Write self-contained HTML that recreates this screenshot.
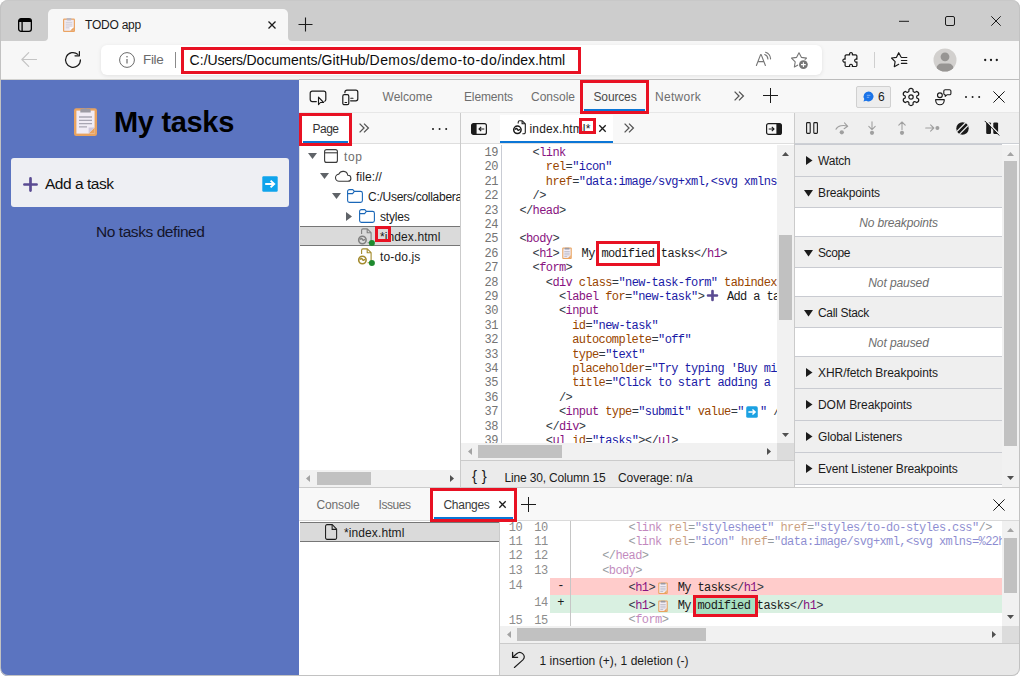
<!DOCTYPE html>
<html lang="en">
<head>
<meta charset="utf-8">
<title>TODO app</title>
<style>
*{box-sizing:border-box;margin:0;padding:0}
html,body{width:1020px;height:676px;overflow:hidden;background:#fff}
body{font-family:"Liberation Sans",sans-serif;font-size:12px;color:#1b1b1b;position:relative}
.a{position:absolute}
.t{position:absolute;white-space:nowrap;line-height:16px;height:16px}
.m{font-family:"Liberation Mono",monospace;font-size:12px;letter-spacing:-.6px}
svg{position:absolute;overflow:visible}
#win{position:absolute;left:0;top:0;width:1020px;height:676px;border-radius:8px;overflow:hidden;background:#f7f7f7}
#frame{position:absolute;left:0;top:0;width:1020px;height:676px;border-radius:8px;border:1px solid #c2c2c2;border-top-color:#c8c8c8;pointer-events:none;z-index:50}
.red{position:absolute;border:3px solid #e81123;z-index:20}
/* browser chrome */
#titlebar{left:0;top:0;width:1020px;height:41px;background:#cdcdcd}
#tab{left:48px;top:9px;width:240px;height:32px;background:#f7f7f7;border-radius:5px 5px 0 0}
#toolbar{left:0;top:41px;width:1020px;height:39px;background:#f7f7f7;border-bottom:1px solid #d2d2d0}
#addr{left:101px;top:45px;width:721px;height:30px;background:#fff;border-radius:6px;box-shadow:0 1px 4px rgba(0,0,0,.09)}
/* page */
#page{left:1px;top:80px;width:298px;height:596px;background:#5b74c0}
#form{left:10px;top:78px;width:278px;height:49px;background:#eeeff3;border-radius:3px}
/* devtools */
#dt{left:0;top:0;width:1020px;height:676px}
.bar{background:#f8f8f8}
.hl{position:absolute;background:#d0d0d0}
.sb{position:absolute;background:#f1f1f1}
.th{position:absolute;background:#c1c1c1}
.g{color:#6e6e6e}
.sec{position:absolute;left:496px;width:208px;height:31px;background:#efefef;border-bottom:1px solid #cbcbcb}
.sec .t{left:23px;top:7px;color:#1b1b1b}
.sec svg{left:10px;top:10px}
.emp{position:absolute;left:496px;width:208px;height:28px;background:#fff;border-bottom:1px solid #cbcbcb;text-align:center;font-style:italic;color:#6e6e6e;line-height:28px}
.ln{position:absolute;left:0;width:36.8px;text-align:right;color:#747474;height:14.4px;line-height:14.4px}
.cl{position:absolute;left:0;white-space:pre;height:14.4px;line-height:14.4px;color:#1b1b1b}
.es{display:inline-block;width:16px;height:10px;position:relative;vertical-align:baseline}.es svg{left:2.5px;top:.5px}
.tg{color:#881280}.an{color:#994500}.av{color:#1a1aa6}.pu{color:#303942}
</style>
</head>
<body>
<div id="win">
<div class="a" id="titlebar"></div>
<div class="a" id="tab"></div>
<div class="a" id="toolbar"></div>
<div class="a" id="addr"></div>
<svg class="a" style="left:44px;top:37px" width="4" height="4" viewBox="0 0 4 4"><path d="M4 0v4H0a4 4 0 0 0 4-4z" fill="#f7f7f7"/></svg>
<svg class="a" style="left:288px;top:37px" width="4" height="4" viewBox="0 0 4 4"><path d="M0 0v4h4a4 4 0 0 1-4-4z" fill="#f7f7f7"/></svg>
<svg style="left:18px;top:18px" width="14" height="14" viewBox="0 0 14 14"><rect x=".65" y=".65" width="12.7" height="12.7" rx="2.4" fill="none" stroke="#000" stroke-width="1.3"/><path d="M.7 3.2A2.4 2.4 0 0 1 3 .7h8a2.4 2.4 0 0 1 2.3 2.5V4H.7z" fill="#000"/><path d="M4.1 4v9.3" stroke="#000" stroke-width="1.3"/></svg>
<svg style="left:63px;top:18px" width="12" height="14" viewBox="0 0 12 14"><rect x="0" y=".6" width="12" height="13.400" rx="1.300" fill="#eba463"/><rect x="1.200" y="1.800" width="9.600" height="11" fill="#efeaf2"/><path d="M6.900 12.800l3.900-3.900v3.900z" fill="#e8a25f"/><path d="M6.900 12.800V8.900h3.900z" fill="#fdfbfd"/><rect x="3.500" y="0" width="5" height="2.400" rx=".8" fill="#bdb9c2"/><path d="M2.800 4.400h6.400M2.800 6.200h6.400M2.800 8h6.400M2.800 9.800h3.400" stroke="#cfccd5" stroke-width=".9"/></svg>
<div class="t" id="tabtitle" style="letter-spacing:-0.227px;left:85px;top:17px;font-size:12px;color:#1b1b1b">TODO app</div>
<svg style="left:268px;top:21px" width="8" height="8" viewBox="0 0 8 8"><path d="M.5.5l7 7M7.500 .5l-7 7" stroke="#1b1b1b" stroke-width="1.3" fill="none"/></svg>
<svg style="left:298px;top:17px" width="15" height="15" viewBox="0 0 15 15"><path d="M7.500 .5v14M.5 7.500h14" stroke="#1b1b1b" stroke-width="1.1" fill="none"/></svg>
<svg style="left:899px;top:16px" width="10" height="10" viewBox="0 0 10 10"><path d="M0 5.300h10" stroke="#1b1b1b" stroke-width="1" fill="none"/></svg>
<svg style="left:945px;top:16px" width="10" height="10" viewBox="0 0 10 10"><rect x=".5" y=".5" width="9" height="9" rx="1.500" fill="none" stroke="#1b1b1b" stroke-width="1"/></svg>
<svg style="left:991px;top:16px" width="10" height="10" viewBox="0 0 10 10"><path d="M.3.300l9.400 9.400M9.700 .3l-9.400 9.400" stroke="#1b1b1b" stroke-width="1" fill="none"/></svg>
<svg style="left:21px;top:52px" width="16" height="15" viewBox="0 0 16 15"><path d="M15.500 7.500H1.200M7.700 .7L.9 7.500l6.800 6.800" stroke="#c4c4c4" stroke-width="1.200" fill="none" stroke-linecap="round" stroke-linejoin="round"/></svg>
<svg style="left:65px;top:51px" width="17" height="17" viewBox="0 0 17 17"><path d="M15.400 8.900A7.400 7.400 0 1 1 12.900 3.400" stroke="#1b1b1b" stroke-width="1.250" fill="none" stroke-linecap="round"/><path d="M9.600 3.900h4.400V-.4" transform="translate(.4 .9)" stroke="#1b1b1b" stroke-width="1.250" fill="none" stroke-linecap="round" stroke-linejoin="round"/></svg>
<svg style="left:119px;top:52px" width="16" height="16" viewBox="0 0 16 16"><circle cx="8" cy="8" r="7.400" fill="none" stroke="#6b6b6b" stroke-width="1"/><path d="M8 7v4.600" stroke="#6b6b6b" stroke-width="1.200"/><circle cx="8" cy="4.800" r=".8" fill="#6b6b6b"/></svg>
<div class="t" id="filelbl" style="letter-spacing:-0.316px;left:143px;top:51px;font-size:13.5px;line-height:18px;height:18px;color:#6b6b6b">File</div>
<div class="a" style="left:175px;top:52px;width:1px;height:16px;background:#8a8a8a"></div>
<div class="t" id="url" style="left:189.600px;top:51px;font-size:14px;line-height:18px;height:18px;color:#0c0c0c"><span style="letter-spacing:0.036px;display:inline-block">C:/</span><span style="letter-spacing:-0.276px;display:inline-block">Users/</span><span style="letter-spacing:0.050px;display:inline-block">Documents/</span><span style="letter-spacing:0.076px;display:inline-block">GitHub/</span><span style="letter-spacing:0.428px;display:inline-block">Demos/</span><span style="letter-spacing:0.520px;display:inline-block">demo-to-do/</span><span style="letter-spacing:-0.031px;display:inline-block">index.html</span></div>
<svg style="left:755px;top:51px" width="18" height="16" viewBox="0 0 18 16"><path d="M1.400 14.500L5.600 3.600h.6l4.200 10.900M2.900 10.600h6" stroke="#767676" stroke-width="1.100" fill="none" stroke-linecap="round" stroke-linejoin="round"/><path d="M9.700 3.600a5 5 0 0 1 3.200 4.400M10.600 1.200a7.500 7.500 0 0 1 5 6.700" stroke="#767676" stroke-width="1.100" fill="none" stroke-linecap="round"/></svg>
<svg style="left:790px;top:51px" width="19" height="18" viewBox="0 0 19 18"><path d="M9.00 1.70L11.35 6.36L16.51 7.16L12.80 10.84L13.64 15.99L9.00 13.60L4.36 15.99L5.20 10.84L1.49 7.16L6.65 6.36Z" stroke="#767676" stroke-width="1.100" fill="none" stroke-linejoin="round"/><circle cx="13.400" cy="13.600" r="5.400" fill="#fff"/><circle cx="13.400" cy="13.600" r="4.400" fill="#767676"/><path d="M13.400 11.200v4.800M11 13.600h4.800" stroke="#fff" stroke-width="1.100"/></svg>
<svg style="left:842px;top:52.200px" width="16" height="17" viewBox="0 0 16 17"><path d="M4.400 2.800H7.700A1.500 1.500 0 1 1 10.300 2.800H13.600a1.300 1.300 0 0 1 1.300 1.300V7.300A1.500 1.500 0 1 0 14.900 9.900V13.200a1.300 1.300 0 0 1-1.300 1.300H10.300A1.500 1.500 0 1 0 7.700 14.500H4.400a1.300 1.300 0 0 1-1.300-1.300V9.900A1.500 1.500 0 1 1 3.100 7.300V4.100a1.300 1.300 0 0 1 1.300-1.300Z" stroke="#1b1b1b" stroke-width="1.200" fill="none" stroke-linejoin="round"/></svg>
<div class="a" style="left:874px;top:52px;width:1px;height:16px;background:#cfcfcf"></div>
<svg style="left:890px;top:52px" width="18" height="16" viewBox="0 0 18 16"><path d="M10.900 4.700L8.700 .7 6.500 5.300 1.500 6l3.600 3.600-.8 5.100 4.400-2.400" stroke="#1b1b1b" stroke-width="1.200" fill="none" stroke-linejoin="round" stroke-linecap="round"/><path d="M11.400 5.500h5.400M11.400 8.500h5.400M11.400 11.400h5.400" stroke="#1b1b1b" stroke-width="1.200" fill="none" stroke-linecap="round"/></svg>
<svg style="left:933px;top:48px" width="24" height="24" viewBox="0 0 24 24"><defs><clipPath id="pc"><circle cx="12" cy="12" r="11.500"/></clipPath></defs><circle cx="12" cy="12" r="11.500" fill="#d2d0ce"/><g clip-path="url(#pc)"><circle cx="12" cy="8.800" r="4.400" fill="#979593"/><path d="M3.500 24v-3.500a5 5 0 0 1 5-5h7a5 5 0 0 1 5 5V24z" fill="#979593"/></g></svg>
<svg style="left:983px;top:58px" width="16" height="4" viewBox="0 0 16 4"><circle cx="2.200" cy="2" r="1.150" fill="#1b1b1b"/><circle cx="8" cy="2" r="1.150" fill="#1b1b1b"/><circle cx="13.800" cy="2" r="1.150" fill="#1b1b1b"/></svg>
<div class="a" id="page">
<div class="a" id="form"></div>
<svg role="img" aria-label="📋" style="left:73px;top:27px" width="23" height="29" viewBox="0 0 23 29"><rect x="0" y="1.200" width="23" height="27.800" rx="2.200" fill="#e9a35f"/><rect x="2.400" y="3.600" width="18.200" height="23" fill="#f1ecf5"/><path d="M14.600 26.600l6-6v6z" fill="#e9a35f"/><path d="M14.600 26.600v-6h6z" fill="#cfc8dc"/><path d="M6.300 3.200a1.300 1.300 0 0 1 1.300-1.300h2.500a1.500 1.500 0 0 1 2.800 0h2.500a1.300 1.300 0 0 1 1.300 1.300v2.200H6.300z" fill="#9c9aa3"/><path d="M5 10h13M5 13.300h13M5 16.600h13M5 19.900h8" stroke="#a9a6b3" stroke-width="1.300"/></svg>
<div class="t" id="h1" style="letter-spacing:-0.314px;left:113px;top:22px;font-size:29px;line-height:40px;height:40px;font-weight:bold;color:#000">My tasks</div>
<svg role="img" aria-label="➕" style="left:22px;top:97px" width="15" height="15" viewBox="0 0 15 15"><path d="M7.500 1.400v12.200M1.400 7.500h12.200" stroke="#5a4b92" stroke-width="2.700" stroke-linecap="round" fill="none"/></svg>
<div class="t" id="addtask" style="letter-spacing:-0.475px;left:44px;top:93px;font-size:15.5px;line-height:22px;height:22px;color:#111">Add a task</div>
<svg role="img" aria-label="➡️" style="left:261px;top:96px" width="16" height="16" viewBox="0 0 16 16"><rect x=".3" y=".300" width="15.400" height="15.400" rx="1.200" fill="#0fa4ec"/><path d="M3.200 8h8.400M8.600 4.600L12.200 8l-3.600 3.400" stroke="#fff" stroke-width="1.900" fill="none" stroke-linejoin="miter"/></svg>
<div class="t" id="notasks" style="letter-spacing:-0.436px;left:95px;top:141px;font-size:15.5px;line-height:22px;height:22px;color:#14152b">No tasks defined</div>
</div>
<div class="a" id="dt">
<div class="a" style="left:299px;top:80px;width:721px;height:596px;background:#fff;"></div>
<div class="a" style="left:299px;top:79px;width:721px;height:1px;background:#bcbcbc;"></div>
<div class="a" style="left:299px;top:80px;width:1px;height:596px;background:#e2e2e2;"></div>
<div class="a" style="left:299px;top:80px;width:721px;height:32px;background:#f8f8f8;"></div>
<div class="a" style="left:299px;top:112px;width:721px;height:1px;background:#e7e7e7;"></div>
<div class="a" style="left:299px;top:113px;width:721px;height:30px;background:#f8f8f8;"></div>
<div class="a" style="left:299px;top:143px;width:496px;height:1px;background:#dedede;"></div>
<div class="a" style="left:795px;top:113px;width:225px;height:30px;background:#efefef;"></div>
<div class="a" style="left:795px;top:143px;width:225px;height:1px;background:#cdd0d5;"></div>
<div class="a" style="left:795px;top:144px;width:207px;height:1px;background:#c9cbd1;"></div>
<svg style="left:309px;top:90px" width="18" height="16" viewBox="0 0 18 16"><path d="M7.300 11.600H3.200a2 2 0 0 1-2-2V3.200a2 2 0 0 1 2-2H14.800a2 2 0 0 1 2 2V9.600a2 2 0 0 1-1 1.700" fill="none" stroke="#1b1b1b" stroke-width="1.200" stroke-linecap="round"/><path d="M9.500 7.100V14.600l1.900-2.100h3.200z" fill="none" stroke="#1b1b1b" stroke-width="1.100" stroke-linejoin="round"/></svg>
<svg style="left:342px;top:89px" width="17" height="17" viewBox="0 0 17 17"><path d="M2.900 3.700V3.200a2 2 0 0 1 2-2H13.800a2 2 0 0 1 2 2V9.800a2 2 0 0 1-2 2H8.600" fill="none" stroke="#1b1b1b" stroke-width="1.200" stroke-linecap="round"/><rect x=".8" y="5.700" width="6" height="10" rx="1.500" fill="none" stroke="#1b1b1b" stroke-width="1.200"/><path d="M3 13.500h1.600M8.800 9.300h2.200" stroke="#1b1b1b" stroke-width="1.100" stroke-linecap="round"/></svg>
<div class="t" style="letter-spacing:0.029px;left:382.5px;top:89.00px;font-size:12px;color:#6e6e6e;">Welcome</div>
<div class="t" style="letter-spacing:-0.129px;left:464px;top:89.00px;font-size:12px;color:#6e6e6e;">Elements</div>
<div class="t" style="letter-spacing:-0.004px;left:531px;top:89.00px;font-size:12px;color:#6e6e6e;">Console</div>
<div class="t" style="letter-spacing:-0.147px;left:593.5px;top:89.00px;font-size:12px;color:#4a4a4a;">Sources</div>
<div class="t" style="letter-spacing:0.283px;left:655px;top:89.00px;font-size:12px;color:#6e6e6e;">Network</div>
<div class="a" style="left:584px;top:109px;width:61px;height:2px;background:#0b76d6;"></div>
<svg style="left:734px;top:91px" width="10" height="10" viewBox="0 0 10 10"><path d="M.6.600L5 5 .6 9.400M5 .6L9.400 5 5 9.400" fill="none" stroke="#555" stroke-width="1.300"/></svg>
<svg style="left:763px;top:88px" width="15" height="15" viewBox="0 0 15 15"><path d="M7.500 0v15M0 7.500h15" stroke="#1b1b1b" stroke-width="1" fill="none"/></svg>
<div class="a" style="left:856px;top:86px;width:35px;height:22px;background:#ededed;border:1px solid #d0d0d0;border-radius:2px"></div>
<svg style="left:863px;top:91px" width="11" height="11" viewBox="0 0 11 11"><path d="M5.600 .4a5 5 0 1 1-2.500 9.400L.5 10.500l.8-2.500A5 5 0 0 1 5.600 .4z" fill="#1a73e8"/><path d="M3.800 4.300h3.600M3.800 6.300h2.400" stroke="#8db9f4" stroke-width=".9"/></svg>
<div class="t" style="letter-spacing:-0.188px;left:878px;top:89.00px;font-size:12px;color:#1b1b1b;">6</div>
<svg style="left:902px;top:88px" width="18" height="18" viewBox="0 0 18 18"><path d="M6.89 3.49L6.96 1.37A3 3 0 0 1 11.04 1.37L11.11 3.49A2.5 2.5 0 0 0 12.71 4.41L12.71 4.41L14.59 3.41A3 3 0 0 1 16.63 6.96L14.83 8.08A2.5 2.5 0 0 0 14.83 9.92L14.83 9.92L16.63 11.04A3 3 0 0 1 14.59 14.59L12.71 13.59A2.5 2.5 0 0 0 11.11 14.51L11.11 14.51L11.04 16.63A3 3 0 0 1 6.96 16.63L6.89 14.51A2.5 2.5 0 0 0 5.29 13.59L5.29 13.59L3.41 14.59A3 3 0 0 1 1.37 11.04L3.17 9.92A2.5 2.5 0 0 0 3.17 8.08L3.17 8.08L1.37 6.96A3 3 0 0 1 3.41 3.41L5.29 4.41A2.5 2.5 0 0 0 6.89 3.49z" fill="none" stroke="#1b1b1b" stroke-width="1.200" stroke-linejoin="round"/><circle cx="9" cy="9" r="2.200" fill="none" stroke="#1b1b1b" stroke-width="1.200"/></svg>
<svg style="left:935px;top:89px" width="17" height="17" viewBox="0 0 17 17"><circle cx="4.900" cy="6.200" r="2.400" fill="none" stroke="#1b1b1b" stroke-width="1.150"/><path d="M.7 10.600h8.500v.9a4.250 4.250 0 0 1-8.500 0z" fill="none" stroke="#1b1b1b" stroke-width="1.150" stroke-linejoin="round"/><path d="M10.200 .7h4.300a1.400 1.400 0 0 1 1.400 1.400v2.300a1.400 1.400 0 0 1-1.400 1.400h-2.600l-1.700 1.500V5.800a1.400 1.400 0 0 1-1.400-1.400V2.100A1.400 1.400 0 0 1 10.200 .7z" fill="none" stroke="#1b1b1b" stroke-width="1.100" stroke-linejoin="round"/></svg>
<svg style="left:964.3px;top:95px" width="17.2" height="4" viewBox="0 0 17.2 4"><circle cx="2" cy="2" r="1" fill="#1b1b1b"/><circle cx="8.6" cy="2" r="1" fill="#1b1b1b"/><circle cx="15.2" cy="2" r="1" fill="#1b1b1b"/></svg>
<svg style="left:993px;top:91px" width="12" height="12" viewBox="0 0 12 12"><path d="M.4.400L11.6 11.6M11.6 .4L.4 11.6" stroke="#1b1b1b" stroke-width="1" fill="none"/></svg>
<div class="a" style="left:302px;top:115px;width:47px;height:28px;background:#fff;"></div>
<div class="t" style="letter-spacing:-0.508px;left:312.5px;top:121.00px;font-size:12px;color:#333;">Page</div>
<div class="a" style="left:303px;top:140.5px;width:44.5px;height:2px;background:#0b76d6;"></div>
<svg style="left:359.4px;top:123.2px" width="10" height="10" viewBox="0 0 10 10"><path d="M.6.600L5 5 .6 9.400M5 .6L9.400 5 5 9.400" fill="none" stroke="#555" stroke-width="1.300"/></svg>
<svg style="left:431.3px;top:127px" width="17.2" height="4" viewBox="0 0 17.2 4"><circle cx="2" cy="2" r="1" fill="#1b1b1b"/><circle cx="8.6" cy="2" r="1" fill="#1b1b1b"/><circle cx="15.2" cy="2" r="1" fill="#1b1b1b"/></svg>
<div class="a" style="left:460px;top:113px;width:1px;height:375px;background:#cbcbcb;"></div>
<svg style="left:471px;top:123px" width="16" height="12" viewBox="0 0 16 12"><rect x=".6" y=".600" width="14.800" height="10.800" rx="2" fill="none" stroke="#1b1b1b" stroke-width="1.200"/><path d="M.6 2.600a2 2 0 0 1 2-2h3v10.800h-3a2 2 0 0 1-2-2z" fill="#1b1b1b"/><path d="M13.300 6H8.200M10.200 3.800L8 6l2.200 2.200" fill="none" stroke="#1b1b1b" stroke-width="1.100"/></svg>
<div class="a" style="left:500px;top:115px;width:113px;height:28px;background:#fff;"></div>
<div class="a" style="left:500px;top:141px;width:113px;height:2px;background:#0b76d6;"></div>
<svg style="left:513px;top:120px" width="13" height="15" viewBox="0 0 13 15"><path d="M5.200 3.600V2.200A1.400 1.400 0 0 1 6.600 .8h2.700l3 3v8.600a1.400 1.400 0 0 1-1.400 1.400H9.400" fill="none" stroke="#1b1b1b" stroke-width="1.100" stroke-linejoin="round"/><path d="M9.100 .9v2.900h3" fill="none" stroke="#1b1b1b" stroke-width="1.100"/><circle cx="4.400" cy="9.800" r="3.700" fill="#fff" stroke="#1b1b1b" stroke-width="1.500"/><path d="M2 9.600c.8-1.500 1.700-1.500 2.400-.2s1.500 1.200 2.400-.3" fill="none" stroke="#1b1b1b" stroke-width="1.400"/></svg>
<div class="t" style="letter-spacing:0.148px;left:529.5px;top:121.00px;font-size:12px;color:#1b1b1b;">index.html*</div>
<svg style="left:599px;top:125px" width="7" height="7" viewBox="0 0 7 7"><path d="M.3.300l6.400 6.400M6.700 .3L.3 6.700" stroke="#1b1b1b" stroke-width="1.300" fill="none"/></svg>
<svg style="left:624.2px;top:123.2px" width="10" height="10" viewBox="0 0 10 10"><path d="M.6.600L5 5 .6 9.400M5 .6L9.400 5 5 9.400" fill="none" stroke="#555" stroke-width="1.300"/></svg>
<svg style="left:766px;top:123px" width="16" height="12" viewBox="0 0 16 12"><rect x=".6" y=".600" width="14.800" height="10.800" rx="2" fill="none" stroke="#1b1b1b" stroke-width="1.200"/><path d="M15.400 2.600a2 2 0 0 0-2-2h-3v10.800h3a2 2 0 0 0 2-2z" fill="#1b1b1b"/><path d="M2.700 6h5.100M5.800 3.800L8 6 5.800 8.200" fill="none" stroke="#1b1b1b" stroke-width="1.100"/></svg>
<div class="a" style="left:794px;top:113px;width:1px;height:375px;background:#cbcbcb;"></div>
<svg style="left:806px;top:122px" width="12" height="12" viewBox="0 0 12 12"><rect x=".6" y=".600" width="3.600" height="10.800" rx=".8" fill="none" stroke="#1b1b1b" stroke-width="1.100"/><rect x="7.800" y=".600" width="3.600" height="10.800" rx=".8" fill="none" stroke="#1b1b1b" stroke-width="1.100"/></svg>
<svg style="left:835px;top:121px" width="14" height="14" viewBox="0 0 14 14"><path d="M1 8.300C2.500 4.600 8.500 3.600 12.500 5.300M9.500 1.800l3.200 3.500-3.600 2.400" fill="none" stroke="#a0a0a0" stroke-width="1.100" stroke-linecap="round" stroke-linejoin="round"/><circle cx="6.800" cy="11.300" r="2.100" fill="#a0a0a0"/></svg>
<svg style="left:867px;top:121px" width="10" height="14" viewBox="0 0 10 14"><path d="M5 .8v7.600M1.800 5.400L5 8.600l3.200-3.200" fill="none" stroke="#a0a0a0" stroke-width="1.100" stroke-linecap="round" stroke-linejoin="round"/><circle cx="5" cy="11.800" r="2.100" fill="#a0a0a0"/></svg>
<svg style="left:897px;top:121px" width="10" height="14" viewBox="0 0 10 14"><path d="M5 8.600V1M1.800 4.200L5 1l3.200 3.200" fill="none" stroke="#a0a0a0" stroke-width="1.100" stroke-linecap="round" stroke-linejoin="round"/><circle cx="5" cy="11.800" r="2.100" fill="#a0a0a0"/></svg>
<svg style="left:924.500px;top:123px" width="16" height="10" viewBox="0 0 16 10"><path d="M.7 5h7.800M5.600 1.800L8.800 5 5.600 8.200" fill="none" stroke="#a0a0a0" stroke-width="1.100" stroke-linecap="round" stroke-linejoin="round"/><circle cx="12.400" cy="5" r="2" fill="#a0a0a0"/></svg>
<svg style="left:956px;top:121.500px" width="13" height="13" viewBox="0 0 13 13"><defs><clipPath id="dbc"><circle cx="6.500" cy="6.500" r="6.200"/></clipPath></defs><circle cx="6.500" cy="6.500" r="6.200" fill="#1b1b1b"/><g clip-path="url(#dbc)"><path d="M-1 11.300L11.300 -1M1.700 14L14 1.700" stroke="#efefef" stroke-width="1.250"/></g></svg>
<svg style="left:985px;top:121px" width="14" height="14" viewBox="0 0 14 14"><rect x="1.200" y="1.400" width="4.800" height="11.500" rx="1.200" fill="#1b1b1b"/><rect x="8.300" y="1.400" width="4.800" height="11.500" rx="1.200" fill="#1b1b1b"/><path d="M.9 -.5l13.400 13.800" stroke="#efefef" stroke-width="1.300"/><path d="M0 .2l14 14" stroke="#1b1b1b" stroke-width="1" stroke-linecap="round"/></svg>
<svg style="left:307.7px;top:153.3px" width="9" height="6" viewBox="0 0 9 6"><path d="M0 0h9L4.500 6z" fill="#5f6368"/></svg>
<svg style="left:324px;top:149px" width="14" height="14" viewBox="0 0 14 14"><rect x=".6" y=".600" width="12.800" height="12.800" rx="2" fill="none" stroke="#3b3b3b" stroke-width="1.100"/><path d="M.6 3.800h12.800" stroke="#3b3b3b" stroke-width="1.100"/></svg>
<div class="t" style="letter-spacing:0.604px;left:344px;top:149.00px;font-size:12px;color:#6e6e6e;">top</div>
<svg style="left:320px;top:173.3px" width="9" height="6" viewBox="0 0 9 6"><path d="M0 0h9L4.500 6z" fill="#5f6368"/></svg>
<svg style="left:334.5px;top:170px" width="17" height="12" viewBox="0 0 17 12"><path d="M4.300 11.300a3.600 3.600 0 0 1-.4-7.200A4.700 4.700 0 0 1 12.800 5.300a3 3 0 0 1 .2 6z" fill="none" stroke="#3b3b3b" stroke-width="1.100" stroke-linejoin="round"/></svg>
<div class="t" style="letter-spacing:0.094px;left:356px;top:169.00px;font-size:12px;color:#1b1b1b;">file://</div>
<svg style="left:332px;top:193.3px" width="9" height="6" viewBox="0 0 9 6"><path d="M0 0h9L4.500 6z" fill="#5f6368"/></svg>
<svg style="left:347px;top:189.3px" width="16" height="14" viewBox="0 0 16 14"><path d="M.6 2.400A1.800 1.800 0 0 1 2.400 .6h3.400l1.600 1.800h6.200a1.800 1.800 0 0 1 1.800 1.800v7.400a1.800 1.800 0 0 1-1.800 1.800H2.400a1.800 1.800 0 0 1-1.800-1.800z" fill="none" stroke="#1a67b8" stroke-width="1.100" stroke-linejoin="round"/><path d="M.6 4.600h5l1.800-2.200" fill="none" stroke="#1a67b8" stroke-width="1.100" stroke-linejoin="round"/></svg>
<div class="a" style="left:368px;top:186px;width:92px;height:20px;overflow:hidden"><div class="t" style="letter-spacing:-0.261px;left:0;top:3px;font-size:12px;color:#1b1b1b">C:/Users/collabera</div></div>
<svg style="left:346.2px;top:211.8px" width="6" height="9" viewBox="0 0 6 9"><path d="M0 0v9l6-4.500z" fill="#5f6368"/></svg>
<svg style="left:359px;top:209.3px" width="16" height="14" viewBox="0 0 16 14"><path d="M.6 2.400A1.800 1.800 0 0 1 2.400 .6h3.400l1.600 1.800h6.200a1.800 1.800 0 0 1 1.800 1.800v7.400a1.800 1.800 0 0 1-1.800 1.800H2.400a1.800 1.800 0 0 1-1.800-1.800z" fill="none" stroke="#1a67b8" stroke-width="1.100" stroke-linejoin="round"/><path d="M.6 4.600h5l1.800-2.200" fill="none" stroke="#1a67b8" stroke-width="1.100" stroke-linejoin="round"/></svg>
<div class="t" style="letter-spacing:-0.198px;left:380px;top:209.00px;font-size:12px;color:#1b1b1b;">styles</div>
<div class="a" style="left:300px;top:226px;width:160px;height:20px;background:#dadada;border-top:1px solid #767676;border-bottom:1px solid #767676"></div>
<svg style="left:358.2px;top:227.8px" width="17" height="18" viewBox="0 0 17 18"><path d="M3.600 6V2.300A1.400 1.400 0 0 1 5 .9h4.300l3.800 3.800v8.700a1.400 1.400 0 0 1-1.400 1.400H9.600" fill="none" stroke="#808080" stroke-width="1.100" stroke-linejoin="round"/><path d="M9.200 1v3.700h3.800" fill="none" stroke="#808080" stroke-width="1.100"/><circle cx="4.400" cy="12" r="3.700" fill="none" stroke="#808080" stroke-width="1.600"/><path d="M2 11.600c.8-1.500 1.700-1.500 2.400-.2s1.500 1.200 2.400-.3" fill="none" stroke="#808080" stroke-width="1.500"/><circle cx="13.900" cy="14.900" r="3" fill="#1e8a2e"/></svg>
<div class="t" style="letter-spacing:0.102px;left:380px;top:229.00px;font-size:12px;color:#1b1b1b;">*index.html</div>
<svg style="left:358.2px;top:247.8px" width="17" height="18" viewBox="0 0 17 18"><path d="M3.600 6V2.300A1.400 1.400 0 0 1 5 .9h4.300l3.800 3.800v8.700a1.400 1.400 0 0 1-1.400 1.400H9.600" fill="none" stroke="#a38a2c" stroke-width="1.100" stroke-linejoin="round"/><path d="M9.200 1v3.700h3.800" fill="none" stroke="#a38a2c" stroke-width="1.100"/><circle cx="4.400" cy="12" r="3.700" fill="none" stroke="#a38a2c" stroke-width="1.600"/><path d="M2 11.600c.8-1.500 1.700-1.500 2.400-.2s1.500 1.200 2.400-.3" fill="none" stroke="#a38a2c" stroke-width="1.500"/><circle cx="13.900" cy="14.900" r="3" fill="#1e8a2e"/></svg>
<div class="t" style="letter-spacing:0.143px;left:380px;top:249.00px;font-size:12px;color:#1b1b1b;">to-do.js</div>
<div class="a" style="left:300px;top:470px;width:160px;height:17px;background:#f1f1f1;"></div>
<div class="a" style="left:317px;top:472px;width:53.5px;height:13px;background:#c1c1c1;"></div>
<svg style="left:305.5px;top:475px" width="4" height="7" viewBox="0 0 5 9" preserveAspectRatio="none"><path d="M5 0v9L0 4.500z" fill="#a3a3a3"/></svg>
<svg style="left:450px;top:475px" width="4" height="7" viewBox="0 0 5 9" preserveAspectRatio="none"><path d="M0 0v9l5-4.500z" fill="#505050"/></svg>
<div class="a m" style="left:461px;top:145px;width:316px;height:298px;overflow:hidden;background:#fff">
<div class="a" style="left:40px;top:0;width:1px;height:298px;background:#c9ccd4"></div>
<div class="ln" style="top:0.90px">19</div>
<div class="cl" style="left:45.200px;top:0.90px">    <span class="pu">&lt;</span><span class="tg">link</span></div>
<div class="ln" style="top:15.30px">20</div>
<div class="cl" style="left:45.200px;top:15.30px">      <span class="an">rel</span><span class="pu">=</span><span class="av">&quot;icon&quot;</span></div>
<div class="ln" style="top:29.70px">21</div>
<div class="cl" style="left:45.200px;top:29.70px">      <span class="an">href</span><span class="pu">=</span><span class="av">&quot;data:</span><span class="av">image/svg+xml,&lt;svg xmlns=</span></div>
<div class="ln" style="top:44.10px">22</div>
<div class="cl" style="left:45.200px;top:44.10px">    <span class="pu">/&gt;</span></div>
<div class="ln" style="top:58.50px">23</div>
<div class="cl" style="left:45.200px;top:58.50px">  <span class="pu">&lt;/</span><span class="tg">head</span><span class="pu">&gt;</span></div>
<div class="ln" style="top:72.90px">24</div>
<div class="ln" style="top:87.30px">25</div>
<div class="cl" style="left:45.200px;top:87.30px">  <span class="pu">&lt;</span><span class="tg">body</span><span class="pu">&gt;</span></div>
<div class="ln" style="top:101.70px">26</div>
<div class="cl" style="left:45.200px;top:101.70px">    <span class="pu">&lt;</span><span class="tg">h1</span><span class="pu">&gt;</span><span class="es"><svg class="e" role="img" aria-label="📋" width="10" height="12" viewBox="0 0 23 29"><rect x="0" y="1.200" width="23" height="27.800" rx="2.500" fill="#e9a35f"/><rect x="2.600" y="3.800" width="17.800" height="22.600" fill="#f1ecf5"/><path d="M14 26.400l6.400-6.400v6.400z" fill="#e9a35f"/><path d="M6 3.200a1.300 1.300 0 0 1 1.300-1.300H16a1.300 1.300 0 0 1 1.300 1.300v3H6z" fill="#9c9aa3"/><path d="M5 11h13M5 15h13M5 19h13M5 23h7" stroke="#b5b2be" stroke-width="1.800"/></svg></span> My modified tasks<span class="pu">&lt;/</span><span class="tg">h1</span><span class="pu">&gt;</span></div>
<div class="ln" style="top:116.10px">27</div>
<div class="cl" style="left:45.200px;top:116.10px">    <span class="pu">&lt;</span><span class="tg">form</span><span class="pu">&gt;</span></div>
<div class="ln" style="top:130.50px">28</div>
<div class="cl" style="left:45.200px;top:130.50px">      <span class="pu">&lt;</span><span class="tg">div</span> <span class="an">class</span><span class="pu">=</span><span class="av">&quot;new-task-form&quot;</span> <span class="an">tabindex</span><span class="pu">=</span><span class="av">&quot;0&quot;</span><span class="pu">&gt;</span></div>
<div class="ln" style="top:144.90px">29</div>
<div class="cl" style="left:45.200px;top:144.90px">        <span class="pu">&lt;</span><span class="tg">label</span> <span class="an">for</span><span class="pu">=</span><span class="av">&quot;new-task&quot;</span><span class="pu">&gt;</span><span class="es"><svg class="e" role="img" aria-label="➕" width="11" height="11" viewBox="0 0 15 15"><path d="M7.500 1.400v12.200M1.400 7.500h12.200" stroke="#5a4b92" stroke-width="3.6" stroke-linecap="round" fill="none"/></svg></span> Add a task<span class="pu">&lt;/</span><span class="tg">label</span><span class="pu">&gt;</span></div>
<div class="ln" style="top:159.30px">30</div>
<div class="cl" style="left:45.200px;top:159.30px">        <span class="pu">&lt;</span><span class="tg">input</span></div>
<div class="ln" style="top:173.70px">31</div>
<div class="cl" style="left:45.200px;top:173.70px">          <span class="an">id</span><span class="pu">=</span><span class="av">&quot;new-task&quot;</span></div>
<div class="ln" style="top:188.10px">32</div>
<div class="cl" style="left:45.200px;top:188.10px">          <span class="an">autocomplete</span><span class="pu">=</span><span class="av">&quot;off&quot;</span></div>
<div class="ln" style="top:202.50px">33</div>
<div class="cl" style="left:45.200px;top:202.50px">          <span class="an">type</span><span class="pu">=</span><span class="av">&quot;text&quot;</span></div>
<div class="ln" style="top:216.90px">34</div>
<div class="cl" style="left:45.200px;top:216.90px">          <span class="an">placeholder</span><span class="pu">=</span><span class="av">&quot;Try typing &#x27;Buy milk&#x27;&quot;</span></div>
<div class="ln" style="top:231.30px">35</div>
<div class="cl" style="left:45.200px;top:231.30px">          <span class="an">title</span><span class="pu">=</span><span class="av">&quot;Click to start adding a task&quot;</span></div>
<div class="ln" style="top:245.70px">36</div>
<div class="cl" style="left:45.200px;top:245.70px">        <span class="pu">/&gt;</span></div>
<div class="ln" style="top:260.10px">37</div>
<div class="cl" style="left:45.200px;top:260.10px">        <span class="pu">&lt;</span><span class="tg">input</span> <span class="an">type</span><span class="pu">=</span><span class="av">&quot;submit&quot;</span> <span class="an">value</span><span class="pu">=</span><span class="av">&quot;</span><span class="es"><svg class="e" role="img" aria-label="➡️" width="12" height="12" viewBox="0 0 16 16"><rect x=".3" y=".300" width="15.400" height="15.400" rx="2.200" fill="#1ba1e2"/><path d="M3.200 8h8.400M8.600 4.600L12.200 8l-3.600 3.400" stroke="#fff" stroke-width="1.900" fill="none"/></svg></span><span class="av">"</span> <span class="pu">/&gt;</span></div>
<div class="ln" style="top:274.50px">38</div>
<div class="cl" style="left:45.200px;top:274.50px">      <span class="pu">&lt;/</span><span class="tg">div</span><span class="pu">&gt;</span></div>
<div class="ln" style="top:288.90px">39</div>
<div class="cl" style="left:45.200px;top:288.90px">      <span class="pu">&lt;</span><span class="tg">ul</span> <span class="an">id</span><span class="pu">=</span><span class="av">&quot;tasks&quot;</span><span class="pu">&gt;</span><span class="pu">&lt;/</span><span class="tg">ul</span><span class="pu">&gt;</span></div>
</div>
<div class="a" style="left:777px;top:145px;width:17px;height:298px;background:#f1f1f1;"></div>
<div class="a" style="left:779px;top:235px;width:13px;height:85px;background:#c1c1c1;"></div>
<svg style="left:782px;top:151.5px" width="7" height="4" viewBox="0 0 9 5" preserveAspectRatio="none"><path d="M0 5h9L4.500 0z" fill="#505050"/></svg>
<svg style="left:782px;top:432.5px" width="7" height="4" viewBox="0 0 9 5" preserveAspectRatio="none"><path d="M0 0h9L4.500 5z" fill="#505050"/></svg>
<div class="a" style="left:461px;top:443px;width:316px;height:17px;background:#f1f1f1;"></div>
<div class="a" style="left:777px;top:443px;width:17px;height:17px;background:#dcdcdc;"></div>
<div class="a" style="left:478px;top:445px;width:83.5px;height:13px;background:#c1c1c1;"></div>
<svg style="left:467.5px;top:448px" width="4" height="7" viewBox="0 0 5 9" preserveAspectRatio="none"><path d="M5 0v9L0 4.500z" fill="#a3a3a3"/></svg>
<svg style="left:767px;top:448px" width="4" height="7" viewBox="0 0 5 9" preserveAspectRatio="none"><path d="M0 0v9l5-4.500z" fill="#505050"/></svg>
<div class="a" style="left:461px;top:460px;width:333px;height:27px;background:#ebebeb;border-top:1px solid #cbcbcb"></div>
<div class="t" style="letter-spacing:0.271px;left:472px;top:467.50px;font-size:15px;color:#1b1b1b;">{ }</div>
<div class="t" style="letter-spacing:-0.171px;left:504.5px;top:470.00px;font-size:12px;color:#1b1b1b;">Line 30, Column 15</div>
<div class="t" style="letter-spacing:-0.069px;left:618px;top:470.00px;font-size:12px;color:#1b1b1b;">Coverage: n/a</div>
<div class="a" style="left:795px;top:145px;width:207px;height:342px;background:#fff;"></div>
<div class="a" style="left:795px;top:145px;width:207px;height:31px;background:#efefef;"></div>
<div class="a" style="left:795px;top:176px;width:207px;height:1px;background:#c9cbd1;"></div>
<svg style="left:806px;top:156px" width="6.500" height="9" viewBox="0 0 6 8" preserveAspectRatio="none"><path d="M0 0v8l6-4z" fill="#1b1b1b"/></svg>
<div class="t" style="letter-spacing:-0.212px;left:818px;top:153.00px;font-size:12px;color:#1b1b1b;">Watch</div>
<div class="a" style="left:795px;top:177px;width:207px;height:30px;background:#efefef;"></div>
<div class="a" style="left:795px;top:207px;width:207px;height:1px;background:#c9cbd1;"></div>
<svg style="left:803.5px;top:189.5px" width="9" height="6.500" viewBox="0 0 8 6" preserveAspectRatio="none"><path d="M0 0h8L4 6z" fill="#1b1b1b"/></svg>
<div class="t" style="letter-spacing:-0.125px;left:818px;top:185.00px;font-size:12px;color:#1b1b1b;">Breakpoints</div>
<div class="a" style="left:795px;top:237px;width:207px;height:30px;background:#efefef;"></div>
<div class="a" style="left:795px;top:267px;width:207px;height:1px;background:#c9cbd1;"></div>
<svg style="left:803.5px;top:249.5px" width="9" height="6.500" viewBox="0 0 8 6" preserveAspectRatio="none"><path d="M0 0h8L4 6z" fill="#1b1b1b"/></svg>
<div class="t" style="letter-spacing:-0.406px;left:818px;top:245.00px;font-size:12px;color:#1b1b1b;">Scope</div>
<div class="a" style="left:795px;top:297px;width:207px;height:30px;background:#efefef;"></div>
<div class="a" style="left:795px;top:327px;width:207px;height:1px;background:#c9cbd1;"></div>
<svg style="left:803.5px;top:309.5px" width="9" height="6.500" viewBox="0 0 8 6" preserveAspectRatio="none"><path d="M0 0h8L4 6z" fill="#1b1b1b"/></svg>
<div class="t" style="letter-spacing:-0.303px;left:818px;top:305.00px;font-size:12px;color:#1b1b1b;">Call Stack</div>
<div class="a" style="left:795px;top:357px;width:207px;height:31px;background:#efefef;"></div>
<div class="a" style="left:795px;top:388px;width:207px;height:1px;background:#c9cbd1;"></div>
<svg style="left:806px;top:368px" width="6.500" height="9" viewBox="0 0 6 8" preserveAspectRatio="none"><path d="M0 0v8l6-4z" fill="#1b1b1b"/></svg>
<div class="t" style="letter-spacing:-0.066px;left:818px;top:365.00px;font-size:12px;color:#1b1b1b;">XHR/fetch Breakpoints</div>
<div class="a" style="left:795px;top:389px;width:207px;height:31px;background:#efefef;"></div>
<div class="a" style="left:795px;top:420px;width:207px;height:1px;background:#c9cbd1;"></div>
<svg style="left:806px;top:400px" width="6.500" height="9" viewBox="0 0 6 8" preserveAspectRatio="none"><path d="M0 0v8l6-4z" fill="#1b1b1b"/></svg>
<div class="t" style="letter-spacing:-0.047px;left:818px;top:397.00px;font-size:12px;color:#1b1b1b;">DOM Breakpoints</div>
<div class="a" style="left:795px;top:421px;width:207px;height:31px;background:#efefef;"></div>
<div class="a" style="left:795px;top:452px;width:207px;height:1px;background:#c9cbd1;"></div>
<svg style="left:806px;top:432px" width="6.500" height="9" viewBox="0 0 6 8" preserveAspectRatio="none"><path d="M0 0v8l6-4z" fill="#1b1b1b"/></svg>
<div class="t" style="letter-spacing:-0.170px;left:818px;top:429.00px;font-size:12px;color:#1b1b1b;">Global Listeners</div>
<div class="a" style="left:795px;top:453px;width:207px;height:31px;background:#efefef;"></div>
<div class="a" style="left:795px;top:484px;width:207px;height:1px;background:#c9cbd1;"></div>
<svg style="left:806px;top:464px" width="6.500" height="9" viewBox="0 0 6 8" preserveAspectRatio="none"><path d="M0 0v8l6-4z" fill="#1b1b1b"/></svg>
<div class="t" style="letter-spacing:-0.151px;left:818px;top:461.00px;font-size:12px;color:#1b1b1b;">Event Listener Breakpoints</div>
<div class="a" style="left:795px;top:236px;width:207px;height:1px;background:#c9cbd1;"></div>
<div class="t" style="letter-spacing:-0.158px;left:859.25px;top:215.00px;font-size:12px;color:#6e6e6e;font-style:italic">No breakpoints</div>
<div class="a" style="left:795px;top:296px;width:207px;height:1px;background:#c9cbd1;"></div>
<div class="t" style="letter-spacing:-0.089px;left:868.25px;top:275.00px;font-size:12px;color:#6e6e6e;font-style:italic">Not paused</div>
<div class="a" style="left:795px;top:356px;width:207px;height:1px;background:#c9cbd1;"></div>
<div class="t" style="letter-spacing:-0.089px;left:868.25px;top:335.00px;font-size:12px;color:#6e6e6e;font-style:italic">Not paused</div>
<div class="a" style="left:1002px;top:145px;width:17px;height:342px;background:#f1f1f1;"></div>
<div class="a" style="left:1004px;top:161px;width:13px;height:284.5px;background:#c1c1c1;"></div>
<svg style="left:1007px;top:151.5px" width="7" height="4" viewBox="0 0 9 5" preserveAspectRatio="none"><path d="M0 5h9L4.500 0z" fill="#a3a3a3"/></svg>
<svg style="left:1007px;top:475.5px" width="7" height="4" viewBox="0 0 9 5" preserveAspectRatio="none"><path d="M0 0h9L4.500 5z" fill="#505050"/></svg>
<div class="a" style="left:299px;top:487px;width:721px;height:1px;background:#cbcbcb;"></div>
<div class="a" style="left:299px;top:488px;width:721px;height:33px;background:#f8f8f8;"></div>
<div class="a" style="left:299px;top:520px;width:721px;height:1px;background:#dadada;"></div>
<div class="t" style="letter-spacing:-0.147px;left:316.5px;top:497.00px;font-size:12px;color:#6e6e6e;">Console</div>
<div class="t" style="letter-spacing:-0.448px;left:378.5px;top:497.00px;font-size:12px;color:#6e6e6e;">Issues</div>
<div class="a" style="left:433px;top:490px;width:81px;height:29px;background:#fff;"></div>
<div class="t" style="letter-spacing:-0.292px;left:443.5px;top:497.00px;font-size:12px;color:#3a3a3a;">Changes</div>
<div class="a" style="left:434px;top:517px;width:79px;height:2px;background:#0b76d6;"></div>
<svg style="left:499px;top:501px" width="7" height="7" viewBox="0 0 7 7"><path d="M.3.300l6.400 6.400M6.700 .3L.3 6.700" stroke="#1b1b1b" stroke-width="1.300" fill="none"/></svg>
<svg style="left:521px;top:497px" width="15" height="15" viewBox="0 0 15 15"><path d="M7.500 0v15M0 7.500h15" stroke="#1b1b1b" stroke-width="1" fill="none"/></svg>
<svg style="left:993px;top:499px" width="12" height="12" viewBox="0 0 12 12"><path d="M.4.400l11.200 11.200M11.600 .4L.4 11.600" stroke="#1b1b1b" stroke-width="1" fill="none"/></svg>
<div class="a" style="left:299px;top:521px;width:200px;height:155px;background:#fff;"></div>
<div class="a" style="left:300px;top:522px;width:199px;height:20px;background:#dadada;border-top:1px solid #767676;border-bottom:1px solid #767676"></div>
<svg style="left:324.500px;top:524px" width="12.2" height="16" viewBox="0 0 13 16" preserveAspectRatio="none"><path d="M2.200 .6h5.600l4.600 4.600v8.600a1.600 1.600 0 0 1-1.600 1.600H2.200A1.600 1.600 0 0 1 .6 13.800V2.200A1.600 1.600 0 0 1 2.200 .6z" fill="none" stroke="#1b1b1b" stroke-width="1.100" stroke-linejoin="round"/><path d="M7.600 .8v4.600h4.600" fill="none" stroke="#1b1b1b" stroke-width="1.100"/></svg>
<div class="t" style="letter-spacing:0.102px;left:344px;top:525.00px;font-size:12px;color:#1b1b1b;">*index.html</div>
<div class="a" style="left:499px;top:521px;width:1px;height:155px;background:#cbcbcb;"></div>
<div class="a m" style="left:500px;top:521px;width:502px;height:105px;overflow:hidden;background:#fff">
<div class="ln" style="left:0;width:22px;top:-0.40px;color:#8c8c8c">10</div>
<div class="ln" style="left:0;width:47.500px;top:-0.40px;color:#8c8c8c">10</div>
<div class="cl" style="left:75.800px;top:-0.40px;opacity:.5">        <span class="pu">&lt;</span><span class="tg">link</span> <span class="an">rel</span><span class="pu">=</span><span class="av">&quot;stylesheet&quot;</span> <span class="an">href</span><span class="pu">=</span><span class="av">&quot;styles/to-do-styles.css&quot;</span><span class="pu">/&gt;</span></div>
<div class="ln" style="left:0;width:22px;top:14.00px;color:#8c8c8c">11</div>
<div class="ln" style="left:0;width:47.500px;top:14.00px;color:#8c8c8c">11</div>
<div class="cl" style="left:75.800px;top:14.00px;opacity:.5">        <span class="pu">&lt;</span><span class="tg">link</span> <span class="an">rel</span><span class="pu">=</span><span class="av">&quot;icon&quot;</span> <span class="an">href</span><span class="pu">=</span><span class="av">&quot;data:</span><span class="av">image/svg+xml,&lt;svg xmlns=%22h</span></div>
<div class="ln" style="left:0;width:22px;top:28.40px;color:#8c8c8c">12</div>
<div class="ln" style="left:0;width:47.500px;top:28.40px;color:#8c8c8c">12</div>
<div class="cl" style="left:75.800px;top:28.40px;opacity:.5">    <span class="pu">&lt;/</span><span class="tg">head</span><span class="pu">&gt;</span></div>
<div class="ln" style="left:0;width:22px;top:42.80px;color:#8c8c8c">13</div>
<div class="ln" style="left:0;width:47.500px;top:42.80px;color:#8c8c8c">13</div>
<div class="cl" style="left:75.800px;top:42.80px;opacity:.5">    <span class="pu">&lt;</span><span class="tg">body</span><span class="pu">&gt;</span></div>
<div class="a" style="left:50px;top:57px;width:452px;height:17px;background:#ffcccb"></div>
<div class="ln" style="left:0;width:22px;top:57.80px;color:#8c8c8c">14</div>
<div class="cl" style="left:57.200px;top:57.80px;color:#1b1b1b">-</div>
<div class="cl" style="left:75.800px;top:60.20px;">        <span class="pu">&lt;</span><span class="tg">h1</span><span class="pu">&gt;</span><span class="es"><svg class="e" role="img" aria-label="📋" width="10" height="12" viewBox="0 0 23 29"><rect x="0" y="1.200" width="23" height="27.800" rx="2.500" fill="#e9a35f"/><rect x="2.600" y="3.800" width="17.800" height="22.600" fill="#f1ecf5"/><path d="M14 26.400l6.400-6.400v6.400z" fill="#e9a35f"/><path d="M6 3.200a1.300 1.300 0 0 1 1.300-1.300H16a1.300 1.300 0 0 1 1.300 1.300v3H6z" fill="#9c9aa3"/><path d="M5 11h13M5 15h13M5 19h13M5 23h7" stroke="#b5b2be" stroke-width="1.800"/></svg></span> My tasks<span class="pu">&lt;/</span><span class="tg">h1</span><span class="pu">&gt;</span></div>
<div class="a" style="left:50px;top:74px;width:452px;height:18px;background:#d9f0e1"></div>
<div class="ln" style="left:0;width:47.500px;top:75.00px;color:#8c8c8c">14</div>
<div class="cl" style="left:57.200px;top:75.00px;color:#1b1b1b">+</div>
<div class="cl" style="left:75.800px;top:78.20px;">        <span class="pu">&lt;</span><span class="tg">h1</span><span class="pu">&gt;</span><span class="es"><svg class="e" role="img" aria-label="📋" width="10" height="12" viewBox="0 0 23 29"><rect x="0" y="1.200" width="23" height="27.800" rx="2.500" fill="#e9a35f"/><rect x="2.600" y="3.800" width="17.800" height="22.600" fill="#f1ecf5"/><path d="M14 26.400l6.400-6.400v6.400z" fill="#e9a35f"/><path d="M6 3.200a1.300 1.300 0 0 1 1.300-1.300H16a1.300 1.300 0 0 1 1.300 1.300v3H6z" fill="#9c9aa3"/><path d="M5 11h13M5 15h13M5 19h13M5 23h7" stroke="#b5b2be" stroke-width="1.800"/></svg></span> My <span style="background:#a6dfc0;padding:2.200px 4.500px 2.800px 1.500px;margin:0 -4.500px 0 -1.500px">modified</span> tasks<span class="pu">&lt;/</span><span class="tg">h1</span><span class="pu">&gt;</span></div>
<div class="ln" style="left:0;width:22px;top:92.80px;color:#8c8c8c">15</div>
<div class="ln" style="left:0;width:47.500px;top:92.80px;color:#8c8c8c">15</div>
<div class="cl" style="left:75.800px;top:92.40px;opacity:.5">        <span class="pu">&lt;</span><span class="tg">form</span><span class="pu">&gt;</span></div>
<div class="a" style="left:70px;top:0;width:1px;height:106px;background:#c6c6c6"></div>
</div>
<div class="a" style="left:1002px;top:521px;width:17px;height:105px;background:#f1f1f1;"></div>
<div class="a" style="left:1004px;top:537.5px;width:13px;height:55.5px;background:#c1c1c1;"></div>
<svg style="left:1007px;top:527.5px" width="7" height="4" viewBox="0 0 9 5" preserveAspectRatio="none"><path d="M0 5h9L4.500 0z" fill="#a3a3a3"/></svg>
<svg style="left:1007px;top:614.5px" width="7" height="4" viewBox="0 0 9 5" preserveAspectRatio="none"><path d="M0 0h9L4.500 5z" fill="#505050"/></svg>
<div class="a" style="left:500px;top:626px;width:502px;height:17px;background:#f1f1f1;"></div>
<div class="a" style="left:1002px;top:626px;width:17px;height:17px;background:#dcdcdc;"></div>
<div class="a" style="left:517px;top:628px;width:189px;height:13px;background:#c1c1c1;"></div>
<svg style="left:506.5px;top:631px" width="4" height="7" viewBox="0 0 5 9" preserveAspectRatio="none"><path d="M5 0v9L0 4.500z" fill="#a3a3a3"/></svg>
<svg style="left:992px;top:631px" width="4" height="7" viewBox="0 0 5 9" preserveAspectRatio="none"><path d="M0 0v9l5-4.500z" fill="#505050"/></svg>
<div class="a" style="left:500px;top:643px;width:520px;height:33px;background:#e8e8e8;border-top:1px solid #cbcbcb"></div>
<svg style="left:511px;top:651px" width="15" height="18" viewBox="0 0 15 18"><path d="M1.600 1.400V6.300H6.600" fill="none" stroke="#1b1b1b" stroke-width="1.300" stroke-linecap="round" stroke-linejoin="miter"/><path d="M1.900 6L5.600 2.800C7.300 1.300 9.800 1 11.600 2.700 13.500 4.500 13.700 7 11.900 8.900L3.400 16.500" fill="none" stroke="#1b1b1b" stroke-width="1.150" stroke-linecap="round" stroke-linejoin="round"/></svg>
<div class="t" style="letter-spacing:0.041px;left:539.5px;top:653.00px;font-size:12px;color:#1b1b1b;">1 insertion (+), 1 deletion (-)</div>
</div>
<div class="red" style="left:181px;top:47px;width:400px;height:27px"></div>
<div class="red" style="left:580px;top:80px;width:69px;height:34px"></div>
<div class="red" style="left:299px;top:113px;width:53px;height:33px"></div>
<div class="red" style="left:579px;top:118px;width:17px;height:16px"></div>
<div class="red" style="left:375px;top:226px;width:16px;height:16px"></div>
<div class="red" style="left:596px;top:241px;width:64px;height:25px"></div>
<div class="red" style="left:430px;top:488px;width:87px;height:34px"></div>
<div class="red" style="left:693px;top:595px;width:65px;height:22px"></div>
</div>
<div id="frame"></div>
</body>
</html>
